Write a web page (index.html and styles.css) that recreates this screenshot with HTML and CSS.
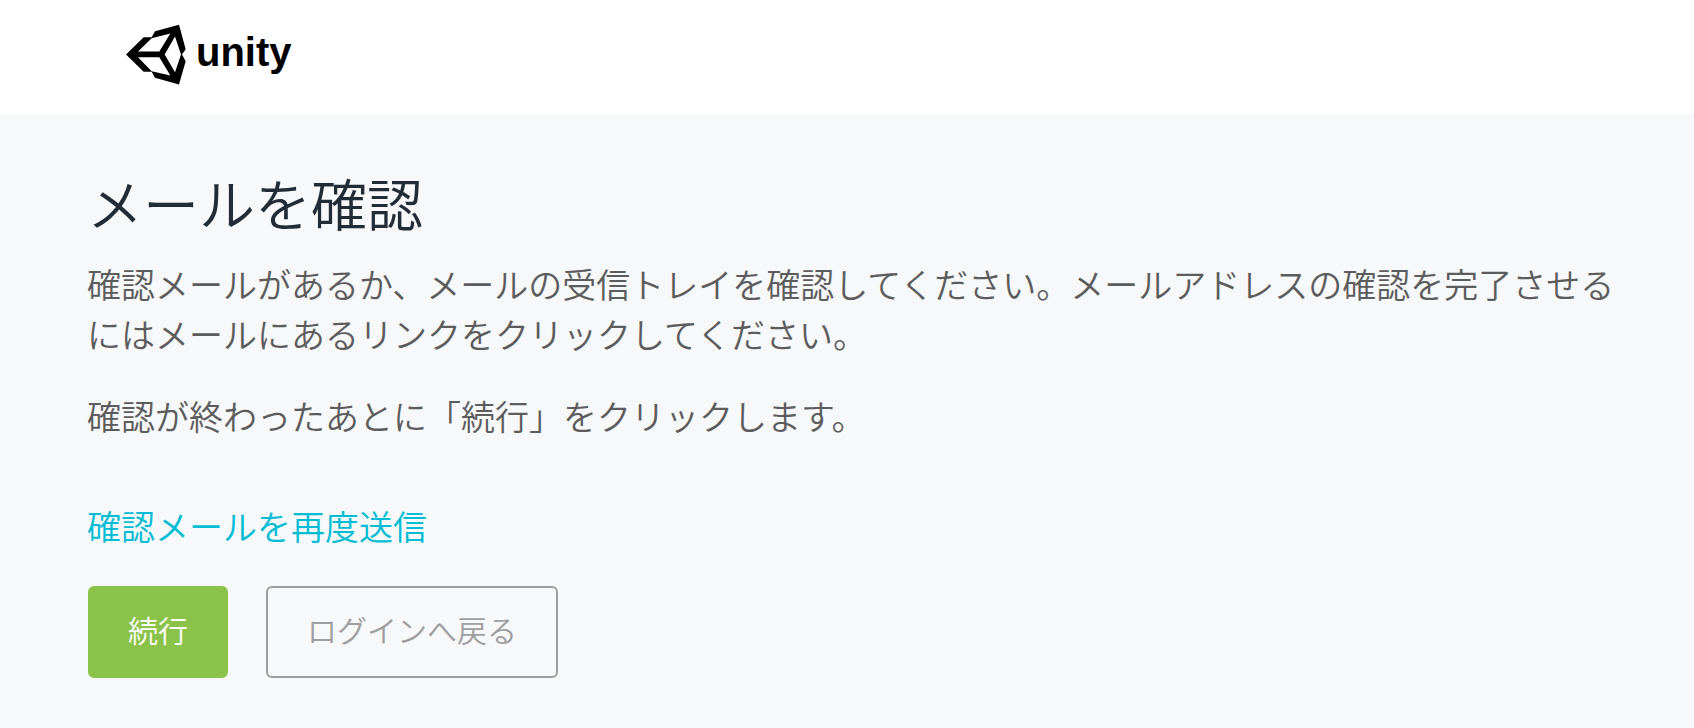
FILE: index.html
```html
<!doctype html>
<html lang="ja">
  <head>
    <meta charset="UTF-8" />
    <meta name="viewport" content="width=device-width, initial-scale=1.0" />
    <title>メールを確認 - Unity</title>
    <link rel="stylesheet" href="styles.css">
  </head>
  <body>
    <header class="header">
      <a class="logo" href="/">
        <svg class="logo-mark" viewBox="50 40 180 182" aria-hidden="true">
          <path fill-rule="evenodd" d="M50 131 L103 79 L127 79 L137 61 L209 42 L229 115 L218 131 L229 151 L209 221 L137 201 L127 183 L103 183 Z M86 122 L150 122 L183 68 L127 82 Z M86 139 L127 181 L183 194 L150 139 Z M166 131 L197 184 L215 131 L197 77 Z" />
        </svg>
        <span class="logo-text">unity</span>
      </a>
    </header>

    <main class="content">
      <h1>メールを確認</h1>
      <p>確認メールがあるか、メールの受信トレイを確認してください。メールアドレスの確認を完了させるにはメールにあるリンクをクリックしてください。</p>
      <p>確認が終わったあとに「続行」をクリックします。</p>
      <a class="resend" href="#">確認メールを再度送信</a>
      <div class="actions">
        <button type="button" class="btn btn-primary">続行</button>
        <button type="button" class="btn btn-outline">ログインへ戻る</button>
      </div>
    </main>
  </body>
</html>
```
FILE: styles.css
```css
body {
  margin: 0;
  background-color: #f7f8fa;
  color: #5c5c5c;
  font-family: "Noto Sans CJK JP", sans-serif;
  font-weight: 350;
}

/* Header */
.header {
  display: flex;
  background-color: #fff;
  padding: 24px 126px 29px;
}

.logo {
  display: flex;
  align-items: center;
  gap: 10px;
  color: #000;
  text-decoration: none;
}

.logo-mark {
  width: 60px;
  height: 61px;
  fill: currentColor;
}

.logo-text {
  font-family: "Liberation Sans", Arial, sans-serif;
  font-size: 40px;
  font-weight: 700;
  line-height: 48px;
  padding-bottom: 6px;
}

/* Content */
.content {
  padding: 52px 64px 50px 87px;
}

h1 {
  margin: 0 0 21px;
  color: #222c37;
  font-size: 56px;
  font-weight: 350;
  line-height: 72px;
}

p {
  margin: 0 0 32px;
  font-size: 34px;
  line-height: 50px;
}

.resend {
  display: inline-block;
  margin-top: 28px;
  color: #00bcd4;
  font-size: 34px;
  line-height: 50px;
  text-decoration: none;
}

/* Buttons */
.actions {
  display: flex;
  gap: 38px;
  margin-top: 35px;
  padding-left: 1px;
}

.btn {
  box-sizing: border-box;
  padding: 19px 38px 25px;
  border: 2px solid transparent;
  border-radius: 6px;
  font-family: inherit;
  font-size: 30px;
  font-weight: 350;
  line-height: 44px;
  cursor: pointer;
}

.btn-primary {
  background-color: #8bc34a;
  border-color: #8bc34a;
  color: #fff;
}

.btn-outline {
  padding-left: 39px;
  padding-right: 39px;
  background-color: transparent;
  border-color: #9e9e9e;
  color: #9e9e9e;
}
```
